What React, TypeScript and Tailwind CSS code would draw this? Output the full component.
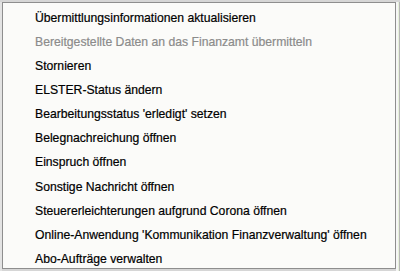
const items: { label: string; disabled?: boolean }[] = [
  { label: "Übermittlungsinformationen aktualisieren" },
  { label: "Bereitgestellte Daten an das Finanzamt übermitteln", disabled: true },
  { label: "Stornieren" },
  { label: "ELSTER-Status ändern" },
  { label: "Bearbeitungsstatus 'erledigt' setzen" },
  { label: "Belegnachreichung öffnen" },
  { label: "Einspruch öffnen" },
  { label: "Sonstige Nachricht öffnen" },
  { label: "Steuererleichterungen aufgrund Corona öffnen" },
  { label: "Online-Anwendung 'Kommunikation Finanzverwaltung' öffnen" },
  { label: "Abo-Aufträge verwalten" },
]

export default function App() {
  return (
    <div
      className="w-[400px] h-[271px] flex bg-[#d6d6d6] pt-[2px] overflow-hidden"
      style={{ fontFamily: '"Liberation Sans", Arial, sans-serif' }}
    >
      <div className="w-[2px] shrink-0 bg-[#e3e3e3]" />
      <div className="w-[394px] h-[267px] shrink-0 border border-[#8e8e8e] bg-[#fbfbf9] pt-[3px]">
        {items.map((it, i) => (
          <div
            key={i}
            className={`h-[24.1px] flex items-center pl-[32px] text-[12.2px] whitespace-nowrap [-webkit-text-stroke:0.2px] ${
              it.disabled ? "text-[#8b8b8b]" : "text-black"
            }`}
          >
            {it.label}
          </div>
        ))}
      </div>
      <div className="flex-1 flex bg-[#e6f0da]">
        <div className="w-[2px] bg-[#f6f6f6]" />
        <div className="w-[1px] bg-[#b8b8b8] ml-[1px]" />
      </div>
    </div>
  )
}
